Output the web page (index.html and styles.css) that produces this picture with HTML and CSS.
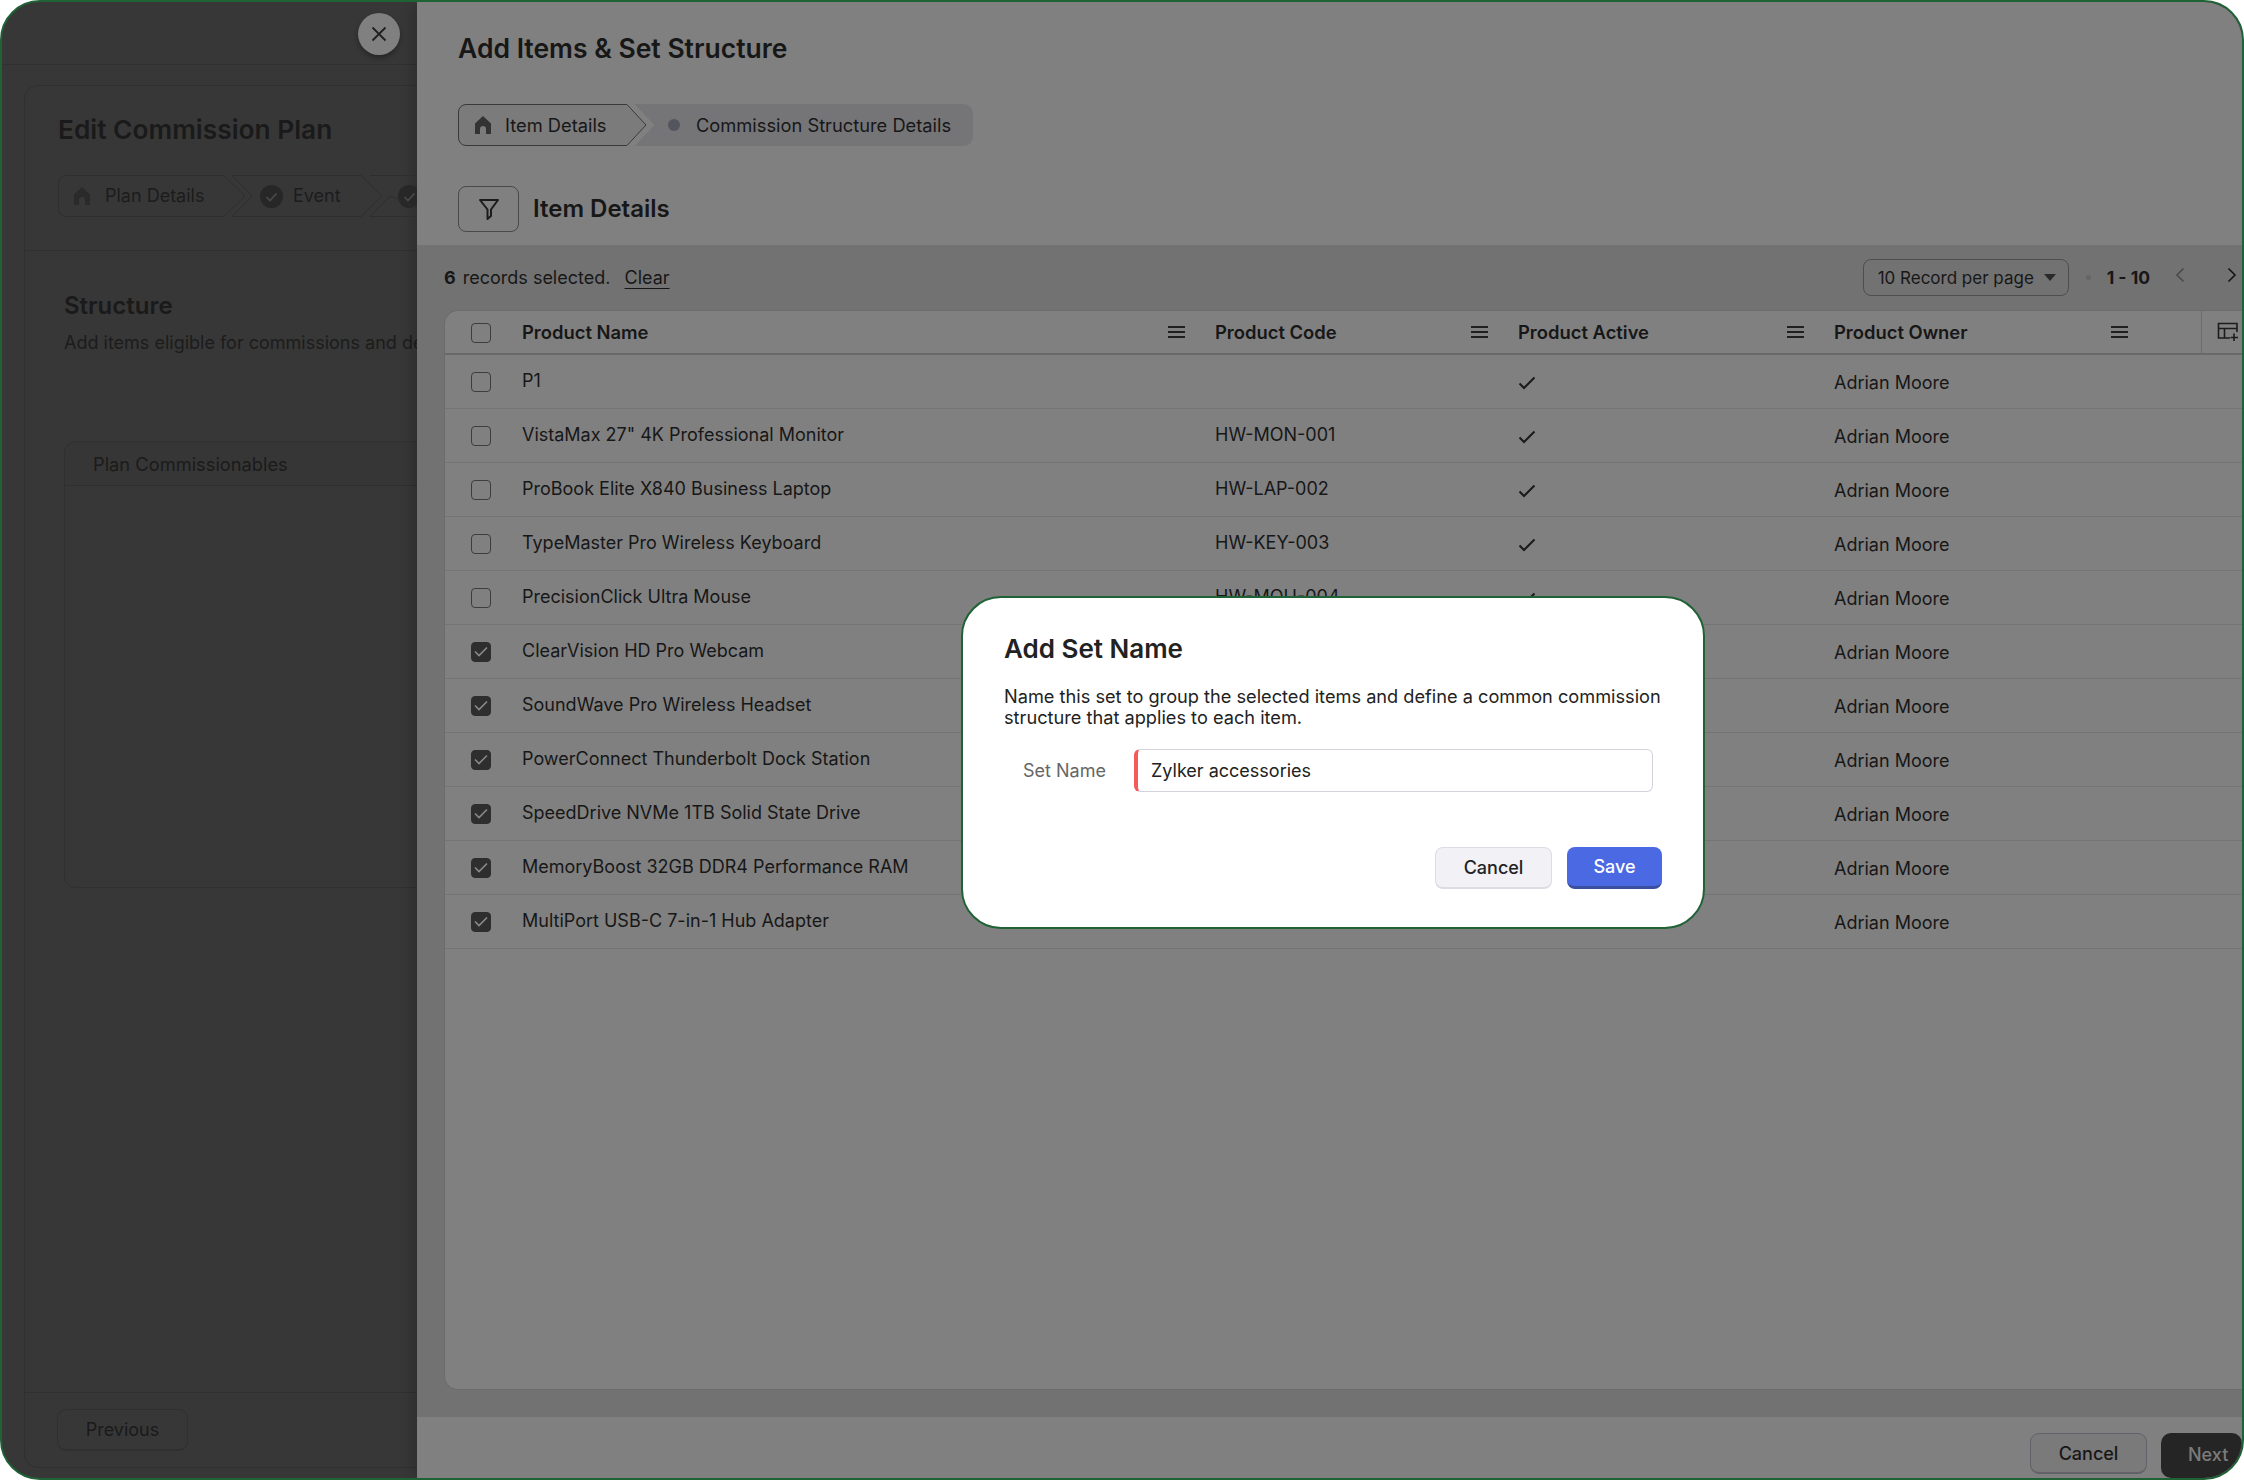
FILE: index.html
```html
<!DOCTYPE html>
<html lang="en">
<head>
<meta charset="utf-8">
<title>Add Items &amp; Set Structure</title>
<link rel="stylesheet" href="styles.css">
</head>
<body>
<div class="frame">
  <aside class="plan">
    <div class="plan-top"></div>
    <div class="plan-card">
      <div class="plan-head">
        <h2 class="plan-title">Edit Commission Plan</h2>
        <div class="plan-steps">
          <svg class="plan-steps-lines" width="360" height="42" viewBox="0 0 360 42" fill="none"><path d="M8 .5H166L187 21 166 41.5H8A7.5 7.5 0 0 1 .5 34V8A7.5 7.5 0 0 1 8 .5Z M174 .5H303L324 21 303 41.5H174L194 21Z M312 .5H380M312 41.5H380L332 21Z" stroke="#2e2e2e"/></svg>
          <span class="plan-step step-one"><svg class="ico-home" width="18" height="20" viewBox="0 0 18 20"><path d="M9 1 1 8.5V19h5v-5a3 3 0 0 1 6 0v5h5V8.5Z" fill="#2a2a2a"/></svg>Plan Details</span>
          <span class="plan-step step-two"><svg width="23" height="23" viewBox="0 0 23 23"><circle cx="11.500" cy="11.500" r="11.500" fill="#272727"/><path d="M6.500 12l3.500 3.500 6.500-7" fill="none" stroke="#4a4a4a" stroke-width="1.600"/></svg>Event</span>
          <span class="plan-step step-three"><svg width="23" height="23" viewBox="0 0 23 23"><circle cx="11.500" cy="11.500" r="11.500" fill="#272727"/><path d="M6.500 12l3.500 3.500 6.500-7" fill="none" stroke="#4a4a4a" stroke-width="1.600"/></svg></span>
        </div>
      </div>
      <div class="plan-body">
        <h3 class="plan-sub">Structure</h3>
        <p class="plan-desc">Add items eligible for commissions and define the structure</p>
        <div class="plan-box">
          <div class="plan-box-head">Plan Commissionables</div>
        </div>
      </div>
      <div class="plan-foot"><span class="plan-prev">Previous</span></div>
    </div>
  </aside>

  <main class="panel">
    <header class="panel-head">
      <h1 class="panel-title">Add Items &amp; Set Structure</h1>
      <div class="stepper">
        <div class="step-active">
          <svg class="step-shape" width="190" height="42" viewBox="0 0 190 42" fill="none"><path d="M8 .5H169L188 21 169 41.500H8A7.500 7.500 0 0 1 .5 34V8A7.500 7.500 0 0 1 8 .5Z" stroke="#808080" stroke-width="12" fill="#808080"/><path d="M8 .5H169L188 21 169 41.500H8A7.500 7.500 0 0 1 .5 34V8A7.500 7.500 0 0 1 8 .5Z" stroke="#3a3a3a" fill="#7b7b7b"/></svg>
          <svg class="ico-home" width="18" height="20" viewBox="0 0 18 20"><path d="M9 1 1 8.500V19h5v-5a3 3 0 0 1 6 0v5h5V8.500Z" fill="#333"/></svg>
          <span class="step-label">Item Details</span>
        </div>
        <span class="step-dot"></span>
        <span class="step-label">Commission Structure Details</span>
      </div>
      <div class="section-row">
        <span class="filter-btn"><svg width="22" height="24" viewBox="0 0 22 24" fill="none"><path d="M2 3H20L13 12.500V19L9.500 22V12.500Z" stroke="#1c1c1c" stroke-width="2" stroke-linejoin="round"/></svg></span>
        <h2 class="section-title">Item Details</h2>
      </div>
    </header>

    <section class="band">
      <div class="toolbar">
        <div class="selected"><b>6</b> records selected. <a class="clear">Clear</a></div>
        <div class="pager">
          <span class="per-page">10 Record per page<i class="caret"></i></span>
          <span class="pager-dot"></span>
          <b class="pager-range">1 - 10</b>
          <svg class="chev-left" width="10" height="16" viewBox="0 0 10 16" fill="none"><path d="M8.500 1.500 2 8l6.500 6.500" stroke="#4a4a4a" stroke-width="1.600"/></svg>
          <svg class="chev-right" width="10" height="16" viewBox="0 0 10 16" fill="none"><path d="M1.500 1.500 8 8l-6.500 6.500" stroke="#151515" stroke-width="1.600"/></svg>
        </div>
      </div>

      <div class="table">
        <div class="row row-head">
          <span class="cell-check"><i class="box"></i></span>
          <span class="th">Product Name<i class="menu"></i></span>
          <span class="th">Product Code<i class="menu"></i></span>
          <span class="th">Product Active<i class="menu"></i></span>
          <span class="th th-last">Product Owner<i class="menu"></i></span>
          <span class="th-add"><svg width="22" height="20" viewBox="0 0 22 20" fill="none" stroke="#1c1c1c" stroke-width="1.600"><path d="M13 16H1.500V1.500H20V10M1.500 6.500H20M7.500 6.500V16"/><path d="M17 11.500V19M13.500 15.500H21" /></svg></span>
        </div>
        <div class="row"><span class="cell-check"><i class="box"></i></span><span class="td up">P1</span><span class="td up"></span><span class="td"><svg class="tick" width="18" height="14" viewBox="0 0 18 14" fill="none"><path d="M1.500 7.500 6 12 16.500 1.500" stroke="#1a1a1a" stroke-width="2"/></svg></span><span class="td">Adrian Moore</span></div>
        <div class="row"><span class="cell-check"><i class="box"></i></span><span class="td up">VistaMax 27" 4K Professional Monitor</span><span class="td up">HW-MON-001</span><span class="td"><svg class="tick" width="18" height="14" viewBox="0 0 18 14" fill="none"><path d="M1.500 7.500 6 12 16.500 1.500" stroke="#1a1a1a" stroke-width="2"/></svg></span><span class="td">Adrian Moore</span></div>
        <div class="row"><span class="cell-check"><i class="box"></i></span><span class="td up">ProBook Elite X840 Business Laptop</span><span class="td up">HW-LAP-002</span><span class="td"><svg class="tick" width="18" height="14" viewBox="0 0 18 14" fill="none"><path d="M1.500 7.500 6 12 16.500 1.500" stroke="#1a1a1a" stroke-width="2"/></svg></span><span class="td">Adrian Moore</span></div>
        <div class="row"><span class="cell-check"><i class="box"></i></span><span class="td up">TypeMaster Pro Wireless Keyboard</span><span class="td up">HW-KEY-003</span><span class="td"><svg class="tick" width="18" height="14" viewBox="0 0 18 14" fill="none"><path d="M1.500 7.500 6 12 16.500 1.500" stroke="#1a1a1a" stroke-width="2"/></svg></span><span class="td">Adrian Moore</span></div>
        <div class="row"><span class="cell-check"><i class="box"></i></span><span class="td up">PrecisionClick Ultra Mouse</span><span class="td up">HW-MOU-004</span><span class="td"><svg class="tick" width="18" height="14" viewBox="0 0 18 14" fill="none"><path d="M1.500 7.500 6 12 16.500 1.500" stroke="#1a1a1a" stroke-width="2"/></svg></span><span class="td">Adrian Moore</span></div>
        <div class="row"><span class="cell-check"><i class="box on"><svg width="14" height="11" viewBox="0 0 14 11" fill="none"><path d="M1 5.500 5 9.500 13 1.500" stroke="#8a8a8a" stroke-width="1.600"/></svg></i></span><span class="td up">ClearVision HD Pro Webcam</span><span class="td up"></span><span class="td"></span><span class="td">Adrian Moore</span></div>
        <div class="row"><span class="cell-check"><i class="box on"><svg width="14" height="11" viewBox="0 0 14 11" fill="none"><path d="M1 5.500 5 9.500 13 1.500" stroke="#8a8a8a" stroke-width="1.600"/></svg></i></span><span class="td up">SoundWave Pro Wireless Headset</span><span class="td up"></span><span class="td"></span><span class="td">Adrian Moore</span></div>
        <div class="row"><span class="cell-check"><i class="box on"><svg width="14" height="11" viewBox="0 0 14 11" fill="none"><path d="M1 5.500 5 9.500 13 1.500" stroke="#8a8a8a" stroke-width="1.600"/></svg></i></span><span class="td up">PowerConnect Thunderbolt Dock Station</span><span class="td up"></span><span class="td"></span><span class="td">Adrian Moore</span></div>
        <div class="row"><span class="cell-check"><i class="box on"><svg width="14" height="11" viewBox="0 0 14 11" fill="none"><path d="M1 5.500 5 9.500 13 1.500" stroke="#8a8a8a" stroke-width="1.600"/></svg></i></span><span class="td up">SpeedDrive NVMe 1TB Solid State Drive</span><span class="td up"></span><span class="td"></span><span class="td">Adrian Moore</span></div>
        <div class="row"><span class="cell-check"><i class="box on"><svg width="14" height="11" viewBox="0 0 14 11" fill="none"><path d="M1 5.500 5 9.500 13 1.500" stroke="#8a8a8a" stroke-width="1.600"/></svg></i></span><span class="td up">MemoryBoost 32GB DDR4 Performance RAM</span><span class="td up"></span><span class="td"></span><span class="td">Adrian Moore</span></div>
        <div class="row"><span class="cell-check"><i class="box on"><svg width="14" height="11" viewBox="0 0 14 11" fill="none"><path d="M1 5.500 5 9.500 13 1.500" stroke="#8a8a8a" stroke-width="1.600"/></svg></i></span><span class="td up">MultiPort USB-C 7-in-1 Hub Adapter</span><span class="td up"></span><span class="td"></span><span class="td">Adrian Moore</span></div>
      </div>
    </section>

    <footer class="panel-foot">
      <span class="foot-cancel">Cancel</span>
      <span class="foot-next">Next</span>
    </footer>
  </main>

  <button class="close" aria-label="Close"><svg width="16" height="16" viewBox="0 0 16 16" fill="none"><path d="M1.500 1.500 14.500 14.500M14.500 1.500 1.500 14.500" stroke="#1f1f1f" stroke-width="1.800"/></svg></button>

  <div class="modal">
    <h2 class="modal-title">Add Set Name</h2>
    <p class="modal-desc">Name this set to group the selected items and define a common commission structure that applies to each item.</p>
    <div class="field">
      <span class="field-label">Set Name</span>
      <span class="field-input">Zylker accessories</span>
    </div>
    <div class="modal-actions">
      <span class="btn-cancel">Cancel</span>
      <span class="btn-save">Save</span>
    </div>
  </div>
</div>
</body>
</html>
```

FILE: styles.css
```css
* { box-sizing: border-box; }
html, body { margin: 0; background: #fff; }
body { font-family: Inter, "Noto Sans", sans-serif; color: #171717; }
h1, h2, h3, p { margin: 0; }

.frame {
  position: relative;
  display: flex;
  width: 2244px;
  height: 1480px;
  border: 2px solid #1f6236;
  border-radius: 40px;
  overflow: hidden;
  background: #373737;
}

/* dimmed plan behind the panel */
.plan {
  display: flex;
  flex-direction: column;
  flex: 0 0 415px;
  width: 415px;
  overflow: hidden;
  color: #1a1a1a;
}
.plan-top { flex: 0 0 63px; border-bottom: 1px solid #303030; }
.plan-card {
  display: flex;
  flex-direction: column;
  width: 600px;
  height: 1383px;
  margin: 20px 0 0 22px;
  border: 1px solid #303030;
  border-radius: 14px;
}
.plan-head { height: 165px; padding: 26px 0 0 33px; border-bottom: 1px solid #303030; }
.plan-title { font-size: 26.300px; line-height: 36px; font-weight: 600; }
.plan-steps { position: relative; display: flex; align-items: center; height: 42px; margin-top: 27px; font-size: 18px; }
.plan-steps-lines { position: absolute; left: 0; top: 0; overflow: visible; }
.plan-step { display: flex; align-items: center; gap: 13px; color: #1c1c1c; line-height: 24px; }
.step-one { padding-left: 15px; width: 202px; gap: 14px; }
.step-two { width: 138px; gap: 10px; }
.plan-body { flex: 1; padding: 40px 0 0 39px; }
.plan-sub { font-size: 24px; line-height: 30px; font-weight: 600; }
.plan-desc { margin-top: 9px; font-size: 18px; line-height: 26px; color: #1c1c1c; white-space: nowrap; }
.plan-box { width: 560px; height: 447px; margin-top: 85px; border: 1px solid #303030; border-radius: 12px; }
.plan-box-head { height: 44px; padding-left: 28px; font-size: 18.300px; line-height: 44px; color: #1b1b1b; background: #363636; border-bottom: 1px solid #2f2f2f; border-radius: 12px 12px 0 0; }
.plan-foot { height: 75px; padding: 16px 0 0 32px; border-top: 1px solid #303030; }
.plan-prev { display: block; width: 131px; height: 42px; font-size: 18px; line-height: 40px; text-align: center; color: #1a1a1a; border: 1px solid #303030; border-bottom-width: 2px; border-radius: 9px; }

/* right slide-over */
.panel {
  display: flex;
  flex-direction: column;
  flex: 1;
  min-width: 0;
  background: #808080;
  box-shadow: -10px 0 10px -4px rgba(0, 0, 0, .14);
}
.panel-head { height: 243px; padding: 29px 0 0 41px; }
.panel-title { font-size: 26.500px; line-height: 34px; font-weight: 600; }

.stepper { display: flex; align-items: center; width: 515px; height: 42px; margin-top: 39px; font-size: 18.300px; background: #757577; border-radius: 9px; }
.step-active { position: relative; display: flex; align-items: center; gap: 13px; width: 196px; height: 42px; padding-left: 16px; }
.step-shape { position: absolute; left: 0; top: 0; overflow: visible; }
.ico-home, .step-active .step-label { position: relative; flex: none; }
.step-dot { width: 12px; height: 12px; margin: 0 16px 0 14px; border-radius: 50%; background: #55555f; }
.step-label { white-space: nowrap; }

.section-row { display: flex; align-items: center; gap: 14px; margin-top: 40px; }
.filter-btn { display: flex; align-items: center; justify-content: center; width: 61px; height: 46px; border: 1px solid #4a4a4a; border-radius: 8px; }
.section-title { font-size: 24px; line-height: 32px; font-weight: 600; }

.band { display: flex; flex-direction: column; flex: 0 0 1172px; padding: 0 0 27px 27px; background: #727272; }
.toolbar { display: flex; align-items: center; justify-content: space-between; flex: 0 0 65px; font-size: 18px; }
.selected b { font-weight: 700; margin-right: 2px; }
.clear { margin-left: 9px; text-decoration: underline; text-underline-offset: 4px; }
.pager { display: flex; align-items: center; }
.per-page { display: flex; align-items: center; justify-content: space-between; width: 206px; height: 37px; padding: 0 12px 0 14px; font-size: 17px; border: 1px solid #4e4e4e; border-radius: 8px; white-space: nowrap; }
.caret { width: 0; height: 0; border: 6px solid transparent; border-top: 7px solid #2a2a2a; border-bottom: 0; }
.pager-dot { width: 5px; height: 5px; margin: 0 16px 0 17px; border-radius: 50%; background: #666; }
.pager-range { font-size: 17.500px; font-weight: 700; white-space: nowrap; }
.chev-left { margin: 0 0 6px 25px; }
.chev-right { margin: 0 5px 6px 42px; }

.table { flex: 1; background: #808080; border: 1px solid #6c6c6c; border-right: 0; border-radius: 14px 0 0 14px; }
.row {
  display: grid;
  grid-template-columns: 77px 693px 303px 316px 367px 1fr;
  align-items: center;
  height: 54px;
  font-size: 18px;
  border-bottom: 1px solid #747474;
}
.row-head { height: 44px; font-size: 18.400px; font-weight: 600; border-bottom: 2px solid #696969; }
.cell-check { display: flex; padding-left: 26px; }
.row-head .cell-check { padding-top: 2px; }
.box { display: flex; align-items: center; justify-content: center; width: 20px; height: 20px; border: 1.500px solid #3d3d3d; border-radius: 4px; }
.box.on { background: #2e2e2e; border-color: #2e2e2e; }
.th { display: flex; align-items: center; justify-content: space-between; padding-right: 30px; white-space: nowrap; }
.th-last { padding-right: 73px; }
.menu { width: 17px; height: 12px; border-top: 2px solid #1f1f1f; border-bottom: 2px solid #1f1f1f; background: linear-gradient(#1f1f1f, #1f1f1f) center / 100% 2px no-repeat; }
.th-add { display: flex; align-items: center; height: 100%; padding-left: 15px; border-left: 1px solid #6c6c6c; }
.td { padding-top: 2px; white-space: nowrap; }
.up { padding-top: 0; padding-bottom: 2px; }
.tick { display: block; }

.panel-foot { display: flex; justify-content: flex-end; align-items: flex-start; gap: 14px; flex: 1; padding-top: 16px; font-size: 18px; font-weight: 500; }
.foot-cancel { width: 117px; height: 41px; line-height: 39px; text-align: center; background: #7a7a7a; border: 1px solid #616168; border-bottom-width: 2px; border-radius: 9px; }
.foot-next { width: 81px; height: 45px; padding-left: 27px; line-height: 43px; color: #7b7b7b; background: #252525; border-radius: 10px; }

/* overlays */
.close {
  position: absolute;
  left: 356px;
  top: 11px;
  display: flex;
  align-items: center;
  justify-content: center;
  width: 42px;
  height: 42px;
  padding: 0;
  border: 0;
  border-radius: 50%;
  background: #808080;
  box-shadow: 0 3px 5px rgba(0, 0, 0, .3);
}
.modal {
  position: absolute;
  left: 959px;
  top: 594px;
  width: 744px;
  height: 333px;
  padding: 33px 41px 0 41px;
  background: #fff;
  border: 2px solid #1f6236;
  border-radius: 40px;
  color: #222;
}
.modal-title { font-size: 26px; line-height: 36px; font-weight: 600; }
.modal-desc { margin-top: 19px; font-size: 18.200px; line-height: 21px; }
.field { display: flex; align-items: center; margin-top: 21px; }
.field-label { width: 130px; padding-left: 19px; font-size: 18px; color: #666; white-space: nowrap; }
.field-input { width: 519px; height: 43px; padding-left: 13px; font-size: 18px; line-height: 41px; border: 1px solid #d4d4de; border-left: 4px solid #f55a5a; border-radius: 6px; }
.modal-actions { display: flex; justify-content: flex-end; gap: 15px; margin-top: 55px; font-size: 18px; font-weight: 500; }
.btn-cancel { width: 117px; height: 42px; line-height: 39px; text-align: center; background: #f1f1f6; border: 1px solid #dcdce4; border-bottom-width: 2px; border-radius: 8px; }
.btn-save { width: 95px; height: 42px; line-height: 39px; text-align: center; color: #fff; background: #4a69e2; border-bottom: 3px solid #3a4f9e; border-radius: 8px; }
```
